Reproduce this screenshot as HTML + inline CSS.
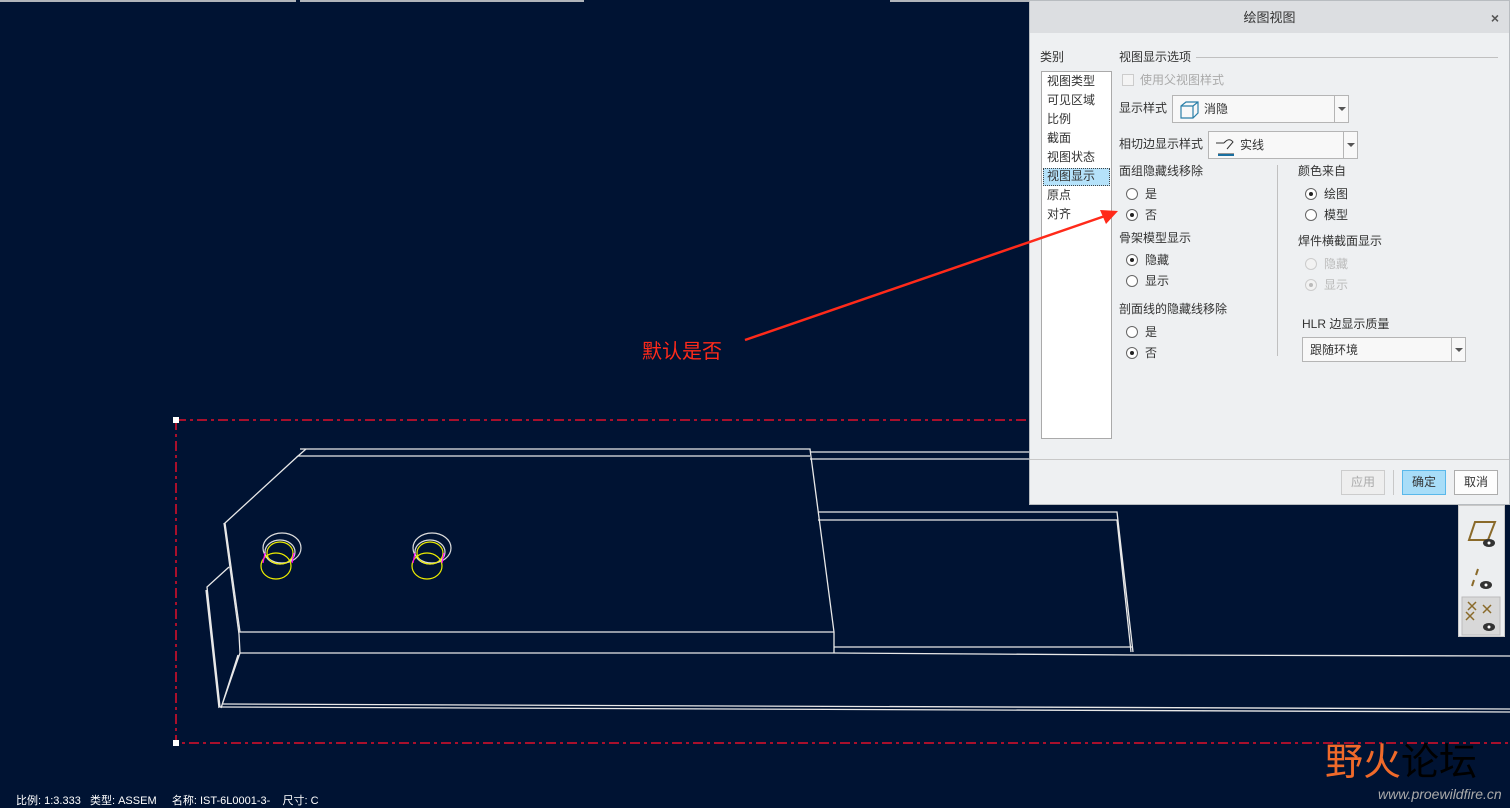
<!DOCTYPE html>
<html><head><meta charset="utf-8"><style>
*{margin:0;padding:0;box-sizing:border-box}
body{width:1510px;height:808px;background:#001333;position:relative;overflow:hidden;font-family:"Liberation Sans","Noto Sans CJK SC",sans-serif;font-size:12px;color:#333}
.a{position:absolute;white-space:nowrap}
#dlg{position:absolute;left:1029px;top:0;width:481px;height:505px;background:#eef0f2;border:1px solid #b8bcc0}
#dlg .t{margin-top:-2px}
#tt{position:absolute;left:0;top:0;width:100%;height:32px;background:#dcdee1;text-align:center;line-height:34px;font-size:13px;color:#333}
.rad{position:absolute;width:12px;height:12px;border:1px solid #666;border-radius:50%;background:#fff}
.rad.on::after{content:"";position:absolute;left:3px;top:3px;width:4px;height:4px;border-radius:50%;background:#222}
.rad.dis{border-color:#ccc;background:#f2f2f2}
.rad.dis.on::after{background:#bbb}
.combo{position:absolute;background:#f8f8f8;border:1px solid #b5b5b5}
.combo .dd{position:absolute;right:0;top:0;bottom:0;width:14px;border-left:1px solid #b5b5b5}
.combo .dd::after{content:"";position:absolute;left:3px;top:50%;margin-top:-2px;border-left:4px solid transparent;border-right:4px solid transparent;border-top:4px solid #555}
.btn{position:absolute;height:25px;width:44px;border:1px solid #adadad;background:#fdfdfd;text-align:center;line-height:23px;font-size:12px}
</style></head><body>
<div class="a" style="left:0;top:0;width:296px;height:2px;background:#b0b4ba"></div>
<div class="a" style="left:300px;top:0;width:284px;height:2px;background:#b0b4ba"></div>
<div class="a" style="left:890px;top:0;width:140px;height:2px;background:#b0b4ba"></div>
<svg class="a" style="left:0;top:0" width="1510" height="808">
<g fill="none" stroke="#e8e8e8" stroke-width="1.3">
<path d="M300 449 L810 449 L834 632 L834 653"/>
<path d="M306 449 L298 456 L810 456"/>
<path d="M298 456 L225 523 L240 632 L834 632"/>
<path d="M224 523 L239 634"/>
<path d="M810 452 L1030 452 M810 459 L1030 459"/>
<path d="M818 512 L1117 512 L1133 652 M818 520 L1117 520 L1131 652"/>
<path d="M834 647 L1133 647 M834 653 L1135 655 L1510 656"/>
<path d="M240 653 L834 653"/>
<path d="M229 567 L207 587 L220 707 M206 590 L219 708"/>
<path d="M239 634 L240 653 L221 708 M238 655 L222 705"/>
<path d="M220 707 L1510 712 M223 704 L1510 709"/>
</g>
<g fill="none" stroke-width="1.2">
<ellipse cx="282" cy="548" rx="19" ry="15" stroke="#ddd"/><ellipse cx="280" cy="552" rx="15" ry="12" stroke="#ddd"/>
<ellipse cx="280" cy="553" rx="13" ry="11" stroke="#ee0"/><ellipse cx="276" cy="566" rx="15" ry="13" stroke="#ee0"/>
<ellipse cx="432" cy="548" rx="19" ry="15" stroke="#ddd"/><ellipse cx="430" cy="552" rx="15" ry="12" stroke="#ddd"/>
<ellipse cx="430" cy="553" rx="13" ry="11" stroke="#ee0"/><ellipse cx="427" cy="566" rx="15" ry="13" stroke="#ee0"/>
<path d="M265 553 L263 563 M294 553 L292 563 M415 553 L413 563 M444 553 L442 563" stroke="#f0f"/>
</g>
<path d="M176 420 L1030 420 M176 420 L176 743 L1510 743" fill="none" stroke="#e0102a" stroke-width="1.5" stroke-dasharray="10 4 3 4"/>
<rect x="173" y="417" width="6" height="6" fill="#fff"/><rect x="173" y="740" width="6" height="6" fill="#fff"/>
</svg>
<div class="a" style="left:642px;top:335px;font-size:20px;color:#ff2a1a">默认是否</div>
<div class="a" style="left:1458px;top:505px;width:47px;height:132px;background:#eceef0;border:1px solid #c8c8c8"></div>
<svg class="a" style="left:1458px;top:505px" width="47" height="132">
<path d="M11 35 L17 17 L37 17 L30 35 Z" fill="none" stroke="#8a6a2a" stroke-width="2"/>
<ellipse cx="31" cy="38" rx="6" ry="4" fill="#333"/><circle cx="31" cy="38" r="1.5" fill="#fff"/>
<path d="M20 64 L18 70 M16 75 L14 81" stroke="#8a6a2a" stroke-width="2"/>
<ellipse cx="28" cy="80" rx="6" ry="4" fill="#333"/><circle cx="28" cy="80" r="1.5" fill="#fff"/>
<rect x="4" y="92" width="38" height="38" fill="#d8d8d8" stroke="#bbb"/>
<path d="M10 97 L18 105 M18 97 L10 105 M25 100 L33 108 M33 100 L25 108 M8 107 L16 115 M16 107 L8 115" stroke="#8a6a2a" stroke-width="1.5"/>
<ellipse cx="31" cy="122" rx="6" ry="4" fill="#333"/><circle cx="31" cy="122" r="1.5" fill="#fff"/>
</svg>
<div class="a" style="left:16px;top:792px;color:#fff;font-size:11px">比例: 1:3.333&nbsp;&nbsp;&nbsp;类型: ASSEM&nbsp;&nbsp;&nbsp;&nbsp;&nbsp;名称: IST-6L0001-3-&nbsp;&nbsp;&nbsp;&nbsp;尺寸: C</div>
<div class="a" style="left:1325px;top:742px;font-size:38px;line-height:42px;"><span style="color:#f06a2a">野火</span><span style="color:#000">论坛</span></div>
<div class="a" style="left:1378px;top:786px;font-size:14px;font-style:italic;color:#aaa">www.proewildfire.cn</div>

<div id="dlg">
<div id="tt">绘图视图<span style="position:absolute;right:10px;top:0;font-weight:bold;font-size:14px;color:#555">×</span></div>
<div class="a t" style="left:10px;top:49px">类别</div>
<div class="a" style="left:11px;top:70px;width:71px;height:368px;background:#fff;border:1px solid #aaa"></div>
<div class="a" style="left:13px;top:167px;width:67px;height:18px;background:#b5e2fa;border:1px dotted #444"></div>
<div class="a t" style="left:17px;top:73px;line-height:19px">视图类型<br>可见区域<br>比例<br>截面<br>视图状态<br>视图显示<br>原点<br>对齐</div>
<div class="a t" style="left:89px;top:49px">视图显示选项</div>
<div class="a" style="left:166px;top:56px;width:302px;height:1px;background:#c0c0c0"></div>
<div class="a" style="left:92px;top:73px;width:12px;height:12px;border:1px solid #ccc;background:#f4f4f4"></div>
<div class="a t" style="left:110px;top:72px;color:#aaa">使用父视图样式</div>
<div class="a t" style="left:89px;top:100px">显示样式</div>
<div class="combo" style="left:142px;top:94px;width:177px;height:28px"><svg class="a" style="left:6px;top:4px" width="22" height="20"><path d="M2 6 L7 2 L19 2 L19 13 L14 18 L2 18 Z M2 6 L14 6 L14 18 M14 6 L19 2" fill="none" stroke="#2a7fa8" stroke-width="1.2"/></svg><span class="a t" style="left:31px;top:6px">消隐</span><div class="dd"></div></div>
<div class="a t" style="left:89px;top:136px">相切边显示样式</div>
<div class="combo" style="left:178px;top:130px;width:150px;height:28px"><svg class="a" style="left:6px;top:3px" width="24" height="22"><path d="M1 8 L9 8 M9 8 Q14 2 18 7 L12 14 M3 19 L19 19" fill="none" stroke="#333" stroke-width="1"/><path d="M3 20 L19 20" stroke="#1a6fa0" stroke-width="2"/></svg><span class="a t" style="left:31px;top:6px">实线</span><div class="dd"></div></div>
<div class="a t" style="left:89px;top:163px">面组隐藏线移除</div>
<div class="rad" style="left:96px;top:187px"></div><div class="a t" style="left:115px;top:186px">是</div>
<div class="rad on" style="left:96px;top:208px"></div><div class="a t" style="left:115px;top:207px">否</div>
<div class="a t" style="left:89px;top:230px">骨架模型显示</div>
<div class="rad on" style="left:96px;top:253px"></div><div class="a t" style="left:115px;top:252px">隐藏</div>
<div class="rad" style="left:96px;top:274px"></div><div class="a t" style="left:115px;top:273px">显示</div>
<div class="a t" style="left:89px;top:301px">剖面线的隐藏线移除</div>
<div class="rad" style="left:96px;top:325px"></div><div class="a t" style="left:115px;top:324px">是</div>
<div class="rad on" style="left:96px;top:346px"></div><div class="a t" style="left:115px;top:345px">否</div>
<div class="a" style="left:247px;top:164px;width:1px;height:191px;background:#c0c0c0"></div>
<div class="a t" style="left:268px;top:163px">颜色来自</div>
<div class="rad on" style="left:275px;top:187px"></div><div class="a t" style="left:294px;top:186px">绘图</div>
<div class="rad" style="left:275px;top:208px"></div><div class="a t" style="left:294px;top:207px">模型</div>
<div class="a t" style="left:268px;top:233px">焊件横截面显示</div>
<div class="rad dis" style="left:275px;top:257px"></div><div class="a t" style="left:294px;top:256px;color:#bbb">隐藏</div>
<div class="rad dis on" style="left:275px;top:278px"></div><div class="a t" style="left:294px;top:277px;color:#bbb">显示</div>
<div class="a t" style="left:272px;top:316px">HLR 边显示质量</div>
<div class="combo" style="left:272px;top:336px;width:164px;height:25px"><span class="a t" style="left:7px;top:5px">跟随环境</span><div class="dd"></div></div>
<div class="a" style="left:0;top:458px;width:479px;height:1px;background:#c8c8c8"></div>
<div class="btn" style="left:311px;top:469px;color:#aaa;border-color:#ccc;background:#eee">应用</div>
<div class="a" style="left:363px;top:469px;width:1px;height:25px;background:#c8c8c8"></div>
<div class="btn" style="left:372px;top:469px;background:#a8ddf8;border-color:#5ab8ea">确定</div>
<div class="btn" style="left:424px;top:469px">取消</div>
</div>
<svg class="a" style="left:0;top:0" width="1510" height="808">
<path d="M745 340 L1105 216" stroke="#ff2a1a" stroke-width="2.5"/>
<path d="M1118 211 L1100 210 L1106 224 Z" fill="#ff2a1a"/>
</svg>
</body></html>
